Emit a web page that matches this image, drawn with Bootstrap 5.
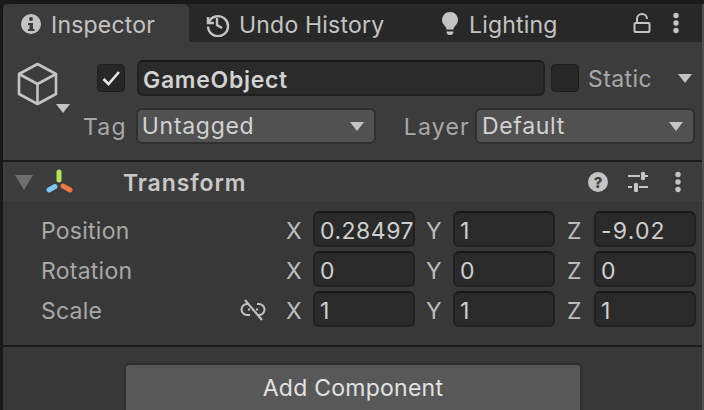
<!DOCTYPE html>
<html lang="en"><head><meta charset="utf-8"><title>Inspector</title>
<link href="https://cdn.jsdelivr.net/npm/bootstrap@5.3.0/dist/css/bootstrap.min.css" rel="stylesheet">
<style>
html,body{height:410px;overflow:hidden;background:#191919;}
body{font-family:Inter,"Liberation Sans",sans-serif;color:#c4c4c4;font-size:23px;line-height:1;}
.shell{margin:4px 0 0 3px;height:406px;background:#383838;overflow:hidden;border-right:2px solid #505050;}
.tabbar{height:38px;background:#282828;}
.utab{height:38px;padding-left:17px;gap:9px;color:#c4c4c4;letter-spacing:.2px;}
.utab span{padding-top:4px;}
.utab svg{margin-top:2px;}
.utab.on{width:186px;background:#3c3c3c;border-radius:6px 6px 0 0;}
.utab.hist{width:208px;padding-left:15px;gap:9px;}
.utab.light{padding-left:44px;gap:10px;width:228px;}
.barbtns{gap:21px;margin-left:8px;}
.hdr{height:118px;background:#3c3c3c;padding:18px 0 0 0;}
.nm{height:36px;}
.chk{width:28px;height:28px;background:#272727;border:1px solid #1f1f1f;border-radius:4px;margin-left:94px;}
.namef{width:408px;height:36px;margin-left:12px;background:#2a2a2a;border:2px solid #212121;border-top-color:#171717;border-radius:6px;padding:4px 4px 0;font-weight:600;color:#d2d2d2;letter-spacing:.7px;}
.chk.st{margin-left:6px;}
.stat{margin-left:9px;width:90px;letter-spacing:.4px;padding-top:2px;}
.tag-row{margin-top:12px;height:36px;}
.lbl{color:#a8a8a8;}
.dd{height:36px;background:#515151;border:2px solid #2f2f2f;border-radius:6px;padding:0 6px 0 4px;color:#d2d2d2;justify-content:space-between;letter-spacing:.7px;}
.dd.a{width:240px;margin-left:9px;}
.dd.b{width:220px;margin-left:5px;padding-left:5px;}
.tagl,.layl{letter-spacing:1.2px;padding-top:2px;}
.tagl{margin-left:80px;}
.layl{margin-left:28px;}
.cube{position:absolute;left:11px;top:20px;}
.tri-over{position:absolute;left:53px;top:62px;}
.head-wrap{position:relative;}
.sep{height:2px;background:#1b1b1b;}
.thead{height:41px;background:#3c3c3c;border-bottom:1px solid #333;padding-left:12px;}
.tname{margin-left:48px;font-weight:600;color:#c8c8c8;width:465px;letter-spacing:.9px;padding-top:2px;}
.arrow2{margin-left:12px;}
.slid{margin-left:20px;}
.dots2{margin-left:26px;}
.tbody{height:142px;padding:8px 0 0 38px;}
.vrow{height:36px;margin-bottom:4px;}
.plab{width:199px;letter-spacing:.25px;padding-top:4px;}
.glink{width:46px;}
.axis{width:27px;color:#bdbdbd;padding-top:4px;}
.axis.g{margin-left:11px;}
.axis.h{margin-left:12px;}
.val{width:102px;height:36px;background:#2a2a2a;border:2px solid #212121;border-top-color:#171717;border-radius:6px;padding:4px 0 0 5px;color:#cfcfcf;overflow:hidden;white-space:nowrap;letter-spacing:1.2px;}
.val.fit{letter-spacing:.5px;}
.footw{padding:16px 0 0 121px;}
.addb{width:458px;height:60px;padding:0 0 10px;background:#585858;border:2px solid #303030;border-top-color:#2c2c2c;border-radius:5px;color:#e2e2e2;font-size:23px;line-height:1;letter-spacing:.25px;}
.addb:hover{background:#585858;color:#e2e2e2;border-color:#303030;}
</style></head>
<body>
<div class="shell">
  <div class="tabbar d-flex align-items-center">
    <div class="utab on d-flex align-items-center">
      <svg width="22" height="22" viewBox="0 0 22 22" aria-hidden="true"><circle cx="11" cy="11" r="10" fill="#c4c4c4"/><circle cx="11" cy="6" r="2" fill="#3c3c3c"/><path d="M8 10h5v6h1.500v2h-6.500v-2h1.500v-4h-1.500z" fill="#3c3c3c"/></svg>
      <span>Inspector</span>
    </div>
    <div class="utab hist d-flex align-items-center">
      <svg width="26" height="26" viewBox="0 0 26 26" aria-hidden="true" fill="none" stroke="#c4c4c4" stroke-width="2.400"><path d="M4 6v6h6"/><path d="M4.500 12A10 10 0 1 1 4 15.500"/><path d="M13 7v7l5 3"/></svg>
      <span>Undo History</span>
    </div>
    <div class="utab light d-flex align-items-center">
      <svg width="18" height="26" viewBox="0 0 18 26" aria-hidden="true"><path d="M9 1a8 8 0 0 1 5 14.200c-1 .8-1.500 1.800-1.500 3.300h-7c0-1.500-.5-2.500-1.500-3.300A8 8 0 0 1 9 1z" fill="#c4c4c4"/><path d="M5.500 20.500h7a3.500 3.500 0 0 1-7 0z" fill="#c4c4c4"/></svg>
      <span>Lighting</span>
    </div>
    <div class="barbtns d-flex align-items-center">
      <svg width="18" height="22" viewBox="0 0 18 22" aria-hidden="true" fill="none" stroke="#c4c4c4" stroke-width="2"><rect x="1.500" y="11" width="15" height="9" rx="1"/><path d="M4 11V7a5 5 0 0 1 10 0"/></svg>
      <svg width="8" height="22" viewBox="0 0 8 22" aria-hidden="true" fill="#c4c4c4"><circle cx="4" cy="3.500" r="2.700"/><circle cx="4" cy="11" r="2.700"/><circle cx="4" cy="18.500" r="2.700"/></svg>
    </div>
  </div>
  <div class="hdr head-wrap">
    <svg class="cube" width="46" height="46" viewBox="0 0 46 46" aria-hidden="true"><g fill="none" stroke="#c4c4c4" stroke-width="2.600" stroke-linejoin="round"><path d="M23.500 2 42 12v20L23.500 42 5 32V12z"/><path d="M5 12l18.500 10L42 12M23.500 22v20"/></g></svg>
    <svg class="tri-over" width="14" height="9" viewBox="0 0 14 9" aria-hidden="true"><path d="M0 0h14L7 9z" fill="#c4c4c4"/></svg>
    <div class="nm d-flex align-items-center">
      <div class="chk d-flex align-items-center justify-content-center">
        <svg width="20" height="18" viewBox="0 0 20 18" aria-hidden="true"><path d="M2.500 10l5 5L18 3" fill="none" stroke="#e6e6e6" stroke-width="2.600"/></svg>
      </div>
      <div class="namef d-flex align-items-center">GameObject</div>
      <div class="chk st"></div>
      <span class="stat lbl">Static</span>
      <svg width="14" height="9" viewBox="0 0 14 9" aria-hidden="true"><path d="M0 0h14L7 9z" fill="#c4c4c4"/></svg>
    </div>
    <div class="tag-row d-flex align-items-center">
      <span class="lbl tagl">Tag</span>
      <div class="dd a d-flex align-items-center"><span>Untagged</span><svg class="me-1" width="14" height="9" viewBox="0 0 14 9" aria-hidden="true"><path d="M0 0h14L7 9z" fill="#c4c4c4"/></svg></div>
      <span class="lbl layl">Layer</span>
      <div class="dd b d-flex align-items-center"><span>Default</span><svg class="me-1" width="14" height="9" viewBox="0 0 14 9" aria-hidden="true"><path d="M0 0h14L7 9z" fill="#c4c4c4"/></svg></div>
    </div>
  </div>
  <div class="sep"></div>
  <div class="thead d-flex align-items-center">
    <svg width="18" height="15" viewBox="0 0 18 15" aria-hidden="true"><path d="M0 0h18L9 15z" fill="#6e6e6e"/></svg>
    <svg class="arrow2" width="30" height="26" viewBox="0 0 30 26" aria-hidden="true" fill="none" stroke-linecap="round" stroke-width="5"><path d="M14 3v8" stroke="#b4e35c"/><path d="M4 21l6-3.500" stroke="#7cc6f5"/><path d="M18 17l7 4" stroke="#ef7544"/></svg>
    <span class="tname">Transform</span>
    <svg width="20" height="20" viewBox="0 0 20 20" aria-hidden="true"><circle cx="10" cy="10" r="10" fill="#c4c4c4"/><text x="10" y="15.500" text-anchor="middle" font-family="Inter" font-size="15" font-weight="800" fill="#3c3c3c">?</text></svg>
    <svg class="slid" width="20" height="20" viewBox="0 0 20 20" aria-hidden="true" fill="#c4c4c4"><rect y="3" width="12" height="2"/><rect x="17" y="3" width="3" height="2"/><rect x="13" y="0" width="4" height="8" rx="1"/><rect y="14" width="4" height="2"/><rect x="11" y="14" width="9" height="2"/><rect x="6" y="11" width="4" height="9" rx="1"/></svg>
    <svg class="dots2" width="8" height="22" viewBox="0 0 8 22" aria-hidden="true" fill="#c4c4c4"><circle cx="4" cy="3.500" r="2.700"/><circle cx="4" cy="11" r="2.700"/><circle cx="4" cy="18.500" r="2.700"/></svg>
  </div>
  <div class="tbody">
    <div class="vrow d-flex align-items-center">
      <span class="plab lbl">Position</span><span class="glink"></span><span class="axis">X</span><div class="val fit d-flex align-items-center">0.28497</div><span class="axis g">Y</span><div class="val d-flex align-items-center">1</div><span class="axis h">Z</span><div class="val d-flex align-items-center">-9.02</div>
    </div>
    <div class="vrow d-flex align-items-center">
      <span class="plab lbl">Rotation</span><span class="glink"></span><span class="axis">X</span><div class="val d-flex align-items-center">0</div><span class="axis g">Y</span><div class="val d-flex align-items-center">0</div><span class="axis h">Z</span><div class="val d-flex align-items-center">0</div>
    </div>
    <div class="vrow d-flex align-items-center">
      <span class="plab lbl">Scale</span><span class="glink"><svg width="26" height="22" viewBox="0 0 26 22" aria-hidden="true" fill="none" stroke="#c4c4c4" stroke-width="2"><path d="M9 5H7a5.500 5.500 0 0 0 0 11h3M17 5h2a5.500 5.500 0 0 1 0 11h-2"/><path d="M8 10.500h10" stroke-dasharray="2 2"/><path d="M5 1l17 20"/></svg></span><span class="axis">X</span><div class="val d-flex align-items-center">1</div><span class="axis g">Y</span><div class="val d-flex align-items-center">1</div><span class="axis h">Z</span><div class="val d-flex align-items-center">1</div>
    </div>
  </div>
  <div class="sep"></div>
  <div class="footw"><button type="button" class="btn addb">Add Component</button></div>
</div>
<script src="https://cdn.jsdelivr.net/npm/bootstrap@5.3.0/dist/js/bootstrap.bundle.min.js"></script>
</body></html>
